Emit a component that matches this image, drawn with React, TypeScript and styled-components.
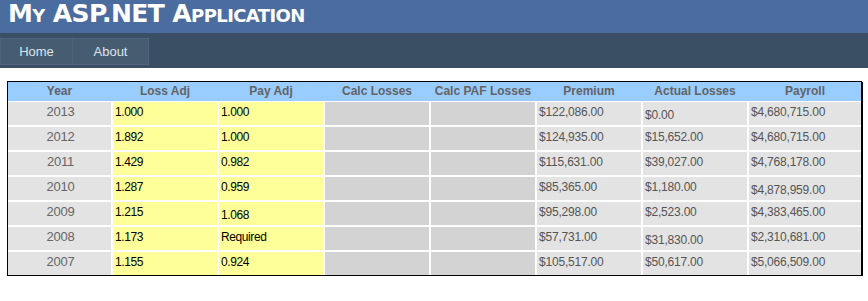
import * as React from "react";
import styled, { createGlobalStyle } from "styled-components";

const GlobalStyle = createGlobalStyle`
  html, body {
    margin: 0;
    padding: 0;
    background: #ffffff;
  }
  body {
    font-family: "Liberation Sans", Arial, sans-serif;
  }
`;

const Page = styled.div`
  width: 868px;
  display: flex;
  flex-direction: column;
`;

const Header = styled.header`
  background: #4b6c9e;
  height: 33px;
  display: flex;
  align-items: center;
  padding: 0 8px;
`;

const Title = styled.h1`
  margin: -5px 0 0;
  color: #ffffff;
  font-family: "DejaVu Sans", "Liberation Sans", sans-serif;
  font-size: 25px;
  font-weight: 700;
  font-variant: small-caps;
  line-height: 28px;
  letter-spacing: -0.6px;
`;

const MenuBar = styled.nav`
  background: #3a4f63;
  height: 35px;
  padding-top: 5px;
  box-sizing: border-box;
  display: flex;
  align-items: flex-start;
`;

const MenuItem = styled.a<{ $w: number }>`
  width: ${p => p.$w}px;
  height: 27px;
  box-sizing: border-box;
  background: #465c71;
  border: 1px solid #4e667d;
  color: #dde4ec;
  font-size: 13px;
  display: flex;
  align-items: center;
  justify-content: center;
  text-decoration: none;
  & + & {
    border-left: none;
  }
`;

const Main = styled.main`
  padding: 13px 6px 0 7px;
`;

const Grid = styled.div`
  width: 853px;
  border: 1px solid #000;
  box-shadow: 1px 1px 0 #000;
  background: #ffffff;
  display: flex;
  flex-direction: column;
  gap: 1px;
`;

const cols = "103px repeat(6, 104px) 1fr";

const HeadRow = styled.div`
  display: grid;
  grid-template-columns: ${cols};
  column-gap: 2px;
  background: #99ccff;
  height: 19px;
`;

const HeadCell = styled.div`
  color: #636363;
  font-size: 12px;
  font-weight: 700;
  text-align: center;
  line-height: 19px;
`;

const Body = styled.div`
  display: grid;
  grid-template-columns: ${cols};
  grid-auto-rows: 23px;
  gap: 2px;
`;

type Kind = "year" | "adj" | "calc" | "money";

const bg: Record<Kind, string> = {
  year: "#e3e3e3",
  adj: "#ffff99",
  calc: "#d3d3d3",
  money: "#e3e3e3",
};

const Cell = styled.div<{ $kind: Kind; $low?: boolean }>`
  background: ${p => bg[p.$kind]};
  color: ${p => (p.$kind === "adj" ? "#000000" : p.$kind === "year" ? "#666666" : "#555555")};
  font-size: ${p => (p.$kind === "year" ? "13px" : "12px")};
  text-align: ${p => (p.$kind === "year" ? "center" : "left")};
  padding: ${p => (p.$low ? "6px" : "3px")} 0 0 2px;
  line-height: 14px;
  box-sizing: border-box;
  white-space: nowrap;
  letter-spacing: ${p => (p.$kind === "adj" ? "-0.4px" : "-0.2px")};
`;

type Row = {
  year: string;
  loss: string;
  pay: string;
  premium: string;
  actual: string;
  payroll: string;
  low?: "pay" | "actual" | "payroll";
};

const rows: Row[] = [
  { year: "2013", loss: "1.000", pay: "1.000", premium: "$122,086.00", actual: "$0.00", payroll: "$4,680,715.00", low: "actual" },
  { year: "2012", loss: "1.892", pay: "1.000", premium: "$124,935.00", actual: "$15,652.00", payroll: "$4,680,715.00" },
  { year: "2011", loss: "1.429", pay: "0.982", premium: "$115,631.00", actual: "$39,027.00", payroll: "$4,768,178.00" },
  { year: "2010", loss: "1.287", pay: "0.959", premium: "$85,365.00", actual: "$1,180.00", payroll: "$4,878,959.00", low: "payroll" },
  { year: "2009", loss: "1.215", pay: "1.068", premium: "$95,298.00", actual: "$2,523.00", payroll: "$4,383,465.00", low: "pay" },
  { year: "2008", loss: "1.173", pay: "Required", premium: "$57,731.00", actual: "$31,830.00", payroll: "$2,310,681.00", low: "actual" },
  { year: "2007", loss: "1.155", pay: "0.924", premium: "$105,517.00", actual: "$50,617.00", payroll: "$5,066,509.00" },
];

const headers = ["Year", "Loss Adj", "Pay Adj", "Calc Losses", "Calc PAF Losses", "Premium", "Actual Losses", "Payroll"];

export default function App() {
  return (
    <Page>
      <GlobalStyle />
      <Header>
        <Title>My ASP.NET Application</Title>
      </Header>
      <MenuBar>
        <MenuItem $w={73} href="#">Home</MenuItem>
        <MenuItem $w={76} href="#">About</MenuItem>
      </MenuBar>
      <Main>
        <Grid>
          <HeadRow>
            {headers.map(h => (
              <HeadCell key={h}>{h}</HeadCell>
            ))}
          </HeadRow>
          <Body>
            {rows.map(r => (
              <React.Fragment key={r.year}>
                <Cell $kind="year">{r.year}</Cell>
                <Cell $kind="adj">{r.loss}</Cell>
                <Cell $kind="adj" $low={r.low === "pay"}>{r.pay}</Cell>
                <Cell $kind="calc" />
                <Cell $kind="calc" />
                <Cell $kind="money">{r.premium}</Cell>
                <Cell $kind="money" $low={r.low === "actual"}>{r.actual}</Cell>
                <Cell $kind="money" $low={r.low === "payroll"}>{r.payroll}</Cell>
              </React.Fragment>
            ))}
          </Body>
        </Grid>
      </Main>
    </Page>
  );
}
